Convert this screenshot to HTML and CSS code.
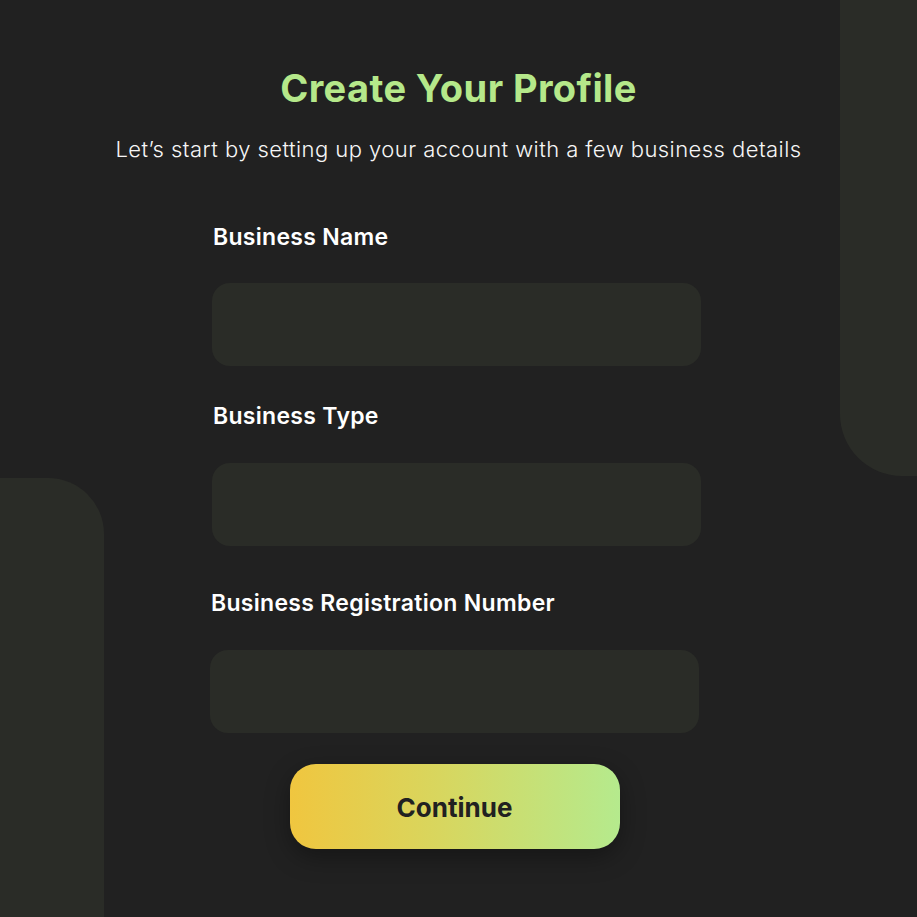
FILE: index.html
```html
<!DOCTYPE html>
<html>
  <head>
    <title>Create Your Profile</title>
    <meta charset="utf-8"/>
    <meta name="viewport" content="width=device-width, initial-scale=1"/>
    <link rel="stylesheet" href="styles.css">
  </head>
  <body>
    <div class="deco deco-right"></div>
    <div class="deco deco-left"></div>

    <main class="profile">
      <h1 class="title">Create Your Profile</h1>
      <p class="subtitle">Let’s start by setting up your account with a few business details</p>

      <form class="form" onsubmit="return false">
        <div class="field field-name">
          <label for="bname">Business Name</label>
          <input id="bname" type="text">
        </div>

        <div class="field field-type">
          <label for="btype">Business Type</label>
          <input id="btype" type="text">
        </div>

        <div class="field field-reg">
          <label for="breg">Business Registration Number</label>
          <input id="breg" type="text">
        </div>

        <button class="continue" type="submit">Continue</button>
      </form>
    </main>
  </body>
</html>
```

FILE: styles.css
```css
html {height: 100%;}
body {
  margin: 0;
  padding: 0;
  min-height: 100%;
  background: #212121;
  color: #fff;
  font-family: Inter, "Noto Sans", sans-serif;
  position: relative;
  overflow: hidden;
}

/* background blocks */
.deco {
  position: absolute;
  background: #2a2c27;
  z-index: 0;
}
.deco-right {
  top: 0;
  right: 0;
  width: 77px;
  height: 476px;
  border-bottom-left-radius: 62px;
}
.deco-left {
  top: 478px;
  left: 0;
  width: 104px;
  height: 460px;
  border-top-right-radius: 56px;
}

.profile {
  position: relative;
  z-index: 1;
  display: flex;
  flex-direction: column;
  align-items: center;
  padding-top: 66px;
}

.title {
  margin: 0;
  font-size: 38px;
  font-weight: 700;
  letter-spacing: 0.4px;
  color: #b5e88a;
  line-height: 1.21;
}

.subtitle {
  margin: 24px 0 0;
  font-size: 22px;
  font-weight: 300;
  letter-spacing: 0.45px;
  color: #f6f6f6;
  line-height: 1.21;
}

.form {
  width: 489px;
  display: flex;
  flex-direction: column;
  margin-top: 61px;
  margin-left: -4px;
}

.field {
  display: flex;
  flex-direction: column;
}
.field label {
  font-size: 23px;
  font-weight: 600;
  letter-spacing: 0.3px;
  line-height: 1.21;
  color: #fff;
  margin-left: 1px;
}
.field input {
  height: 83px;
  margin-top: 32px;
  border: none;
  border-radius: 18px;
  background: #2a2c27;
  color: #fff;
  font: inherit;
  font-size: 20px;
  padding: 0 20px;
  outline: none;
}

.field-type {margin-top: 37px;}
.field-reg {
  margin-top: 44px;
  margin-left: -2px;
  margin-right: 2px;
}
.field-reg input {margin-top: 32px;}

.continue {
  align-self: center;
  width: 330px;
  height: 85px;
  margin-top: 31px;
  margin-left: -4px;
  border: none;
  border-radius: 26px;
  background: linear-gradient(90deg, #f0c63f 0%, #d8d65e 45%, #b5ea8d 100%);
  box-shadow: 0 8px 24px rgba(0,0,0,0.35);
  color: #212121;
  font-family: inherit;
  font-size: 26px;
  font-weight: 700;
  padding-top: 2px;
  cursor: pointer;
}
```
